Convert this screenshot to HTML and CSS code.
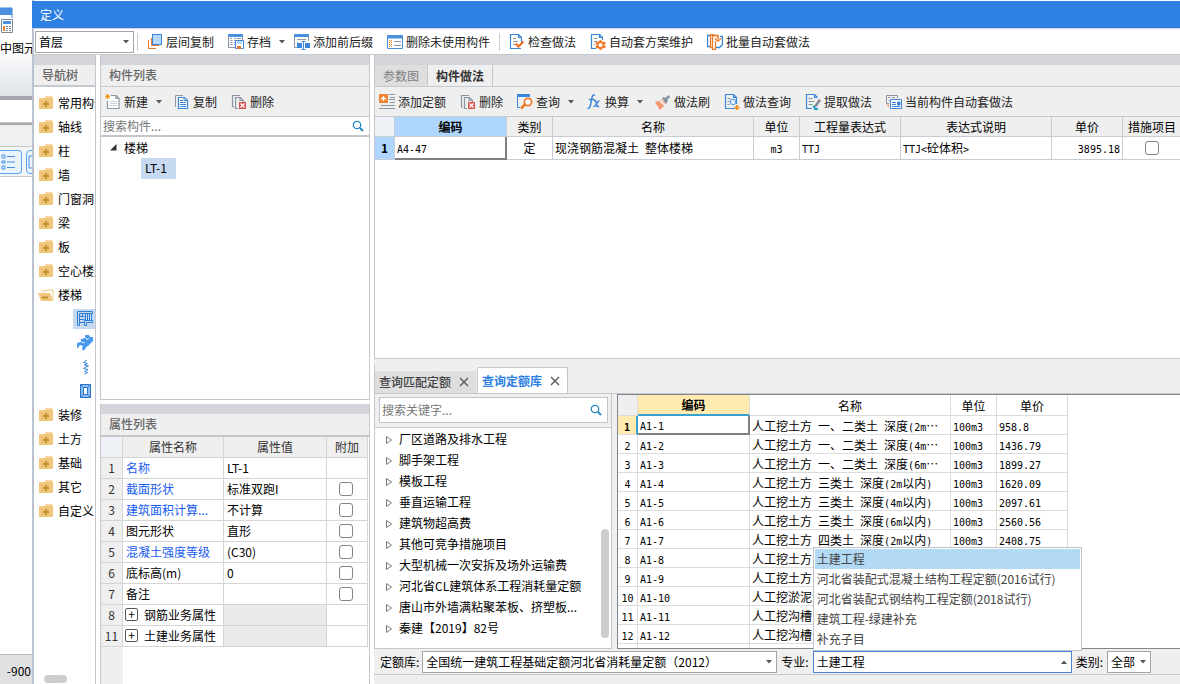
FILE: index.html
```html
<!DOCTYPE html>
<html lang="zh-CN">
<head>
<meta charset="utf-8">
<title>定义</title>
<link rel="stylesheet" href="styles.css">
</head>
<body>
<svg class="sprite" aria-hidden="true">
  <symbol id="i-layers" viewBox="0 0 16 16"><path d="M1.500 6v8.500H9M4.500 4v7.500H12" fill="none" stroke="#e8772e" stroke-width="1"/><rect x="5.500" y=".5" width="9" height="10" fill="#b5d8fb" stroke="#3b86d8"/></symbol>
  <symbol id="i-archive" viewBox="0 0 16 16"><path d="M.5 3v10.500H7M14.500 3v4M2.500 6.500h2M2.500 8.500h2M2.500 10.500h2M6 4.500h2M9 4.500h4M6 6.500h1M2 4.500h2M6 8.500h1M6 10.500h1" fill="none" stroke="#8b97a3"/><path d="M0 0h15v3H0z" fill="#4a90df"/><path d="M7.500 6.500h8v8h-8z" fill="#fff" stroke="#3b86d8"/><path d="M9 7h5v3H9z" fill="#b5d8fb"/><path d="M9 12h4v3H9z" fill="#e8772e"/></symbol>
  <symbol id="i-prefix" viewBox="0 0 16 16"><path d="M.5 3v10.500H3M14.500 3v4M3 5.500h9M3 8.500h1" fill="none" stroke="#8b97a3"/><path d="M0 0h15v3H0z" fill="#4a90df"/><path d="M3 9h5v5H3zM11 9h5v5h-5z" fill="#3b86d8"/><path d="M9.500 8v7M7.500 7.500h4M7.500 15.500h4" stroke="#3b86d8"/></symbol>
  <symbol id="i-unused" viewBox="0 0 16 16"><path d="M.5 1.500h15v13H.5z" fill="#fff" stroke="#4a90df"/><path d="M0 1h16v3.500H0z" fill="#4a90df"/><path d="M2 6l3 3M5 6L2 9M2 10l3 3M5 10l-3 3" stroke="#e8932e"/><path d="M7 7.500h7M7 11.500h7" stroke="#8b97a3"/></symbol>
  <symbol id="i-check" viewBox="0 0 16 16"><path d="M12 14.500H1.500V.5h8l3 3V8M9.500.5v3h3" fill="none" stroke="#3b86d8" stroke-width="1.200"/><path d="M4 4.500h3M4 7.500h5M4 10.500h2" stroke="#8b97a3"/><path d="M6.500 9.500l3 3 5-5" fill="none" stroke="#ea6c22" stroke-width="2"/></symbol>
  <symbol id="i-gear" viewBox="0 0 16 16"><path d="M6 14.500H1.500V.5h8l3 3V6M9.500.5v3h3" fill="none" stroke="#3b86d8" stroke-width="1.200"/><path d="M4 4.500h3M4 7.500h3M4 10.500h1" stroke="#8b97a3"/><circle cx="10.500" cy="11" r="3" fill="#fff" stroke="#ef7a2a" stroke-width="2"/><path d="M10.500 6v2M10.500 14v2M5.800 8.500l2 1M13.500 12.500l2 1M5.800 13.500l2-1M13.500 9.500l2-1" stroke="#ef7a2a" stroke-width="2"/></symbol>
  <symbol id="i-batch" viewBox="0 0 16 16"><path d="M3 1.500H.5v11H3M13 2.500h2.500v8l-3 3H9" fill="none" stroke="#3b86d8" stroke-width="1.300"/><path d="M7 .5H3.500v13H5M9 1.500H5.500v14h3V7" fill="none" stroke="#ef7a2a" stroke-width="1.300"/><path d="M7 1.500h4V5M8 4.500l3 2.500 3-2.500" fill="none" stroke="#ef7a2a" stroke-width="1.500"/></symbol>
  <symbol id="i-new" viewBox="0 0 16 16"><path d="M6 1.500h5l3 3v10H2.500V7M11 1.500v3h3" fill="#fff" stroke="#8b97a3" stroke-width="1.200"/><path d="M5 7.500h7M5 9.500h7M5 11.500h7" stroke="#c9ced4"/><path d="M2.500 0v5M0 2.500h5M.5.5l4 4M4.500.5l-4 4" stroke="#f29a1f"/></symbol>
  <symbol id="i-copy" viewBox="0 0 16 16"><path d="M9 1.500H1.500V13" fill="none" stroke="#8b97a3"/><path d="M4.500 3.500h6l3 3v8h-9z" fill="#fff" stroke="#3b86d8" stroke-width="1.200"/><path d="M10 3.500v3h3.500M6 8.500h6M6 10.500h6M6 12.500h6M6 6.500h3" fill="none" stroke="#3b86d8"/></symbol>
  <symbol id="i-del" viewBox="0 0 16 16"><path d="M9 1.500H1.500V13H3M7 14.500H4.500v-11h5l3 3V8M9 3.500v3h3.500" fill="none" stroke="#8b97a3" stroke-width="1.200"/><path d="M8 8h7v7H8z" fill="#d65555"/><path d="M9.500 9.500l4 4M13.500 9.500l-4 4" stroke="#fff" stroke-width="1.200"/></symbol>
  <symbol id="i-add" viewBox="0 0 16 16"><path d="M0 0h9v9H0z" fill="#ef8437"/><path d="M4.500 2v5M2 4.500h5" stroke="#fff" stroke-width="1.300"/><path d="M10 .5h6M11 3.500h5M10 5.500h6M11 8.500h5M2 11.500h14M0 14.500h16" stroke="#8b97a3"/></symbol>
  <symbol id="i-query" viewBox="0 0 16 16"><path d="M0 0h13v3H0z" fill="#3b86d8"/><path d="M.5 2v11.500H3" fill="none" stroke="#3b86d8"/><circle cx="11" cy="8" r="3.600" fill="#fff" stroke="#ef7a2a" stroke-width="1.800"/><path d="M8 10.500l-4 4" stroke="#ef7a2a" stroke-width="2.500"/></symbol>
  <symbol id="i-fx" viewBox="0 0 16 16"><path d="M9 1.500C6.500-.5 6 3 5.500 6S4 15.500 1.500 14.500M3 5.500h5.500M8 7c2-1.500 2 .5 2.500 3s1 3.500 2.500 2M13.500 7c-2-.5-4 6.500-6 5.500" fill="none" stroke="#3b86d8" stroke-width="1.500"/></symbol>
  <symbol id="i-brush" viewBox="0 0 16 16"><path d="M0 8l4-1 5 5-4 4z" fill="#f5956b"/><path d="M5 6l2-1 4 4-1 2z" fill="#f7c7b0"/><path d="M7 4l2-1 1 1 4-3 1 2-3 3 1 1-2 3z" fill="#8292a0"/></symbol>
  <symbol id="i-docfind" viewBox="0 0 16 16"><path d="M11 14.500H1.500V.5h8l3 3V10M9.500.5v3h3" fill="none" stroke="#3b86d8" stroke-width="1.200"/><path d="M3.500 4.500h3M3.500 7.500h2M3.500 10.500h2" stroke="#8b97a3"/><circle cx="9" cy="8" r="2.800" fill="#dcecfb" stroke="#5797d8"/><path d="M13 11v5M10.500 13.500h5" stroke="#f2961f" stroke-width="2"/></symbol>
  <symbol id="i-extract" viewBox="0 0 16 16"><path d="M7 14.500H1.500V.5h8l3 3M9.500.5v3h3" fill="none" stroke="#3b86d8" stroke-width="1.200"/><path d="M3.500 4.500h4M3.500 7.500h6M3.500 10.500h4" stroke="#8b97a3"/><path d="M9 12l5-7 2 1.500-5 7z" fill="#7d8790"/><path d="M8 12l2 2M9 15h4" stroke="#20a5c9" stroke-width="2"/></symbol>
  <symbol id="i-current" viewBox="0 0 16 16"><path d="M11.500 4V1.500H.5v8H3M2.500 3.500h2M6 3.500h3M2.500 6.500h1" fill="none" stroke="#8b97a3"/><path d="M4.500 5.500h11v9h-11z" fill="#fff" stroke="#3b86d8"/><path d="M6 8.500h4M6 10.500h4M6 12.500h8M11.500 8h2.500v3h-2.500z" fill="#3b86d8" stroke="#3b86d8"/><path d="M2 10v2h1" stroke="#ef7a2a" fill="none"/></symbol>
  <symbol id="i-search" viewBox="0 0 12 12"><circle cx="5" cy="5" r="3.700" fill="none" stroke="#2488bd" stroke-width="1.300"/><path d="M8 8l3 3" stroke="#2488bd" stroke-width="1.800"/></symbol>
  <symbol id="i-folder" viewBox="0 0 16 14"><path d="M8 0h6l1 2H7z" fill="#f3d39b"/><path d="M1 2h14v11H1z" fill="#f0c67b"/><path d="M8 5v6M5 8h6" stroke="#c1902f" stroke-width="2"/></symbol>
  <symbol id="i-folder-open" viewBox="0 0 16 14"><path d="M3 3h5l1-1h6v10" fill="#fff" stroke="#f0c67b"/><path d="M0 5h12l3 8H3z" fill="#f0c67b"/><path d="M4 9.500h6" stroke="#c1902f" stroke-width="2"/></symbol>
  <symbol id="i-stair1" viewBox="0 0 16 16"><path d="M.5.5h15v2h-13v12h-2zM7.500 14.500v-5h8v2h-6v3zM2.500 5.500h5M2.500 8.500h5M2.500 11.500h5M5.500 2.500v3M8.500 2.500v7M10.500 2.500v7M12.500 2.500v7M14.500 2.500v7" fill="none" stroke="#2c7fd6"/></symbol>
  <symbol id="i-stair2" viewBox="0 0 16 16"><path d="M0 8l4-1v-3l4-1V0h4l1 2h3v4l-4 4-1 1-2 1v1l-3 3-1-3 1-2-3-1-2 3H0z" fill="#4a98ee"/><path d="M4.500 7l2 1 1-1M8.500 3l2 1.500 1-1.500" fill="none" stroke="#fff"/></symbol>
  <symbol id="i-stair3" viewBox="0 0 16 16"><path d="M10 1L6.500 3.500l4 1-3 1.500 4 1-4 1.500-1 1 4.500 1-3.500 2 3 1-3 1.500" fill="none" stroke="#3b86d8"/></symbol>
  <symbol id="i-stair4" viewBox="0 0 16 16"><path d="M3 1h11v14H3z" fill="#8ebcf0"/><path d="M3.500 1.500h10v13h-10zM6.500 4.500h4v7h-4zM3.500 1.500l3 3M13.500 1.500l-3 3M3.500 14.500l3-3M13.500 14.500l-3-3" fill="none" stroke="#2c75cc"/><path d="M7 5h3v6H7z" fill="#fff"/></symbol>
  <symbol id="i-down" viewBox="0 0 6 4"><path d="M0 0h6L3 3.500z" fill="#555"/></symbol>
  <symbol id="i-up" viewBox="0 0 6 4"><path d="M0 4h6L3 .5z" fill="#555"/></symbol>
  <symbol id="i-tri" viewBox="0 0 6 8"><path d="M.5.5v7l5-3.500z" fill="#fff" stroke="#777"/></symbol>
  <symbol id="i-tri-open" viewBox="0 0 7 7"><path d="M6.500 0v6.500H0z" fill="#333"/></symbol>
  <symbol id="i-close" viewBox="0 0 10 10"><path d="M1 1l8 8M9 1l-8 8" stroke="#555" stroke-width="1.300"/></symbol>
</svg>

<div class="desk">
  <aside class="back">
    <div class="back-ribbon">
      <svg class="back-logo" viewBox="0 0 32 38"><path d="M0 8h12v10" fill="none" stroke="#3b86d8"/><path d="M0 8h12v7H0z" fill="#4a90df"/><path d="M1.500 19.500h11v13h-11z" fill="#fff" stroke="#7b8894"/><path d="M3 21h8v3H3z" fill="#4a90df"/><path d="M3 26.500h8M3 28.500h8M3 30.500h8" stroke="#7b8894" stroke-dasharray="2 1"/><path d="M3 26h2v5H3z" fill="#ef8437"/></svg>
      <span class="back-label">中图元</span>
    </div>
    <div class="back-gap"></div>
    <div class="back-head"></div>
    <div class="back-tools">
      <button class="back-btn" aria-label="列表"><svg viewBox="0 0 16 16"><path d="M2 1h3v3H2zM2 7h3v2H2zM2 12h3v3H2zM7 2.500h8M7 8h8M7 13.500h8" fill="none" stroke="#4a90df"/></svg></button>
      <button class="back-btn" aria-label="视图"><svg viewBox="0 0 16 16"><path d="M2 2h12v12H2z" fill="none" stroke="#4a90df"/></svg></button>
    </div>
    <div class="back-canvas"></div>
    <div class="back-status">-900</div>
  </aside>

  <main class="dialog">
    <h1 class="title">定义</h1>
    <div class="toolbar main-tools">
      <div class="combo floor"><select aria-label="楼层"><option>首层</option></select><svg class="arr"><use href="#i-down"/></svg></div>
      <span class="sep"></span>
      <button class="tool"><svg class="ic"><use href="#i-layers"/></svg>层间复制</button>
      <button class="tool more"><svg class="ic"><use href="#i-archive"/></svg>存档<svg class="drop"><use href="#i-down"/></svg></button>
      <button class="tool"><svg class="ic"><use href="#i-prefix"/></svg>添加前后缀</button>
      <button class="tool"><svg class="ic"><use href="#i-unused"/></svg>删除未使用构件</button>
      <span class="sep"></span>
      <button class="tool"><svg class="ic"><use href="#i-check"/></svg>检查做法</button>
      <button class="tool"><svg class="ic"><use href="#i-gear"/></svg>自动套方案维护</button>
      <button class="tool"><svg class="ic"><use href="#i-batch"/></svg>批量自动套做法</button>
    </div>

    <div class="work">
      <nav class="nav">
        <div class="band"></div>
        <h2 class="head">导航树</h2>
        <ul class="nav-list">
          <li><svg><use href="#i-folder"/></svg>常用构件</li>
          <li><svg><use href="#i-folder"/></svg>轴线</li>
          <li><svg><use href="#i-folder"/></svg>柱</li>
          <li><svg><use href="#i-folder"/></svg>墙</li>
          <li><svg><use href="#i-folder"/></svg>门窗洞</li>
          <li><svg><use href="#i-folder"/></svg>梁</li>
          <li><svg><use href="#i-folder"/></svg>板</li>
          <li><svg><use href="#i-folder"/></svg>空心楼盖</li>
          <li><svg><use href="#i-folder-open"/></svg>楼梯</li>
          <li class="leaf"><span class="pick on"><svg><use href="#i-stair1"/></svg></span></li>
          <li class="leaf"><span class="pick"><svg><use href="#i-stair2"/></svg></span></li>
          <li class="leaf"><span class="pick"><svg><use href="#i-stair3"/></svg></span></li>
          <li class="leaf"><span class="pick"><svg><use href="#i-stair4"/></svg></span></li>
          <li><svg><use href="#i-folder"/></svg>装修</li>
          <li><svg><use href="#i-folder"/></svg>土方</li>
          <li><svg><use href="#i-folder"/></svg>基础</li>
          <li><svg><use href="#i-folder"/></svg>其它</li>
          <li><svg><use href="#i-folder"/></svg>自定义</li>
        </ul>
        <div class="hbar"></div>
      </nav>

      <div class="mid">
        <section class="pane parts">
          <div class="band"></div>
          <h2 class="head">构件列表</h2>
          <div class="toolbar sub">
            <button class="tool more"><svg class="ic"><use href="#i-new"/></svg>新建<svg class="drop"><use href="#i-down"/></svg></button>
            <button class="tool"><svg class="ic"><use href="#i-copy"/></svg>复制</button>
            <button class="tool"><svg class="ic"><use href="#i-del"/></svg>删除</button>
          </div>
          <label class="search"><input type="text" placeholder="搜索构件..." aria-label="搜索构件"><svg><use href="#i-search"/></svg></label>
          <ul class="part-tree">
            <li><svg><use href="#i-tri-open"/></svg>楼梯</li>
            <li class="child"><span>LT-1</span></li>
          </ul>
        </section>
        <section class="pane props">
          <div class="band"></div>
          <h2 class="head">属性列表</h2>
          <div class="prop-body">
          <table class="prop">
            <colgroup><col class="p0"><col class="p1"><col class="p2"><col class="p3"></colgroup>
            <thead><tr><th></th><th>属性名称</th><th>属性值</th><th>附加</th></tr></thead>
            <tbody>
              <tr><th>1</th><td class="link">名称</td><td>LT-1</td><td></td></tr>
              <tr><th>2</th><td class="link">截面形状</td><td>标准双跑I</td><td><input type="checkbox" aria-label="截面形状附加"></td></tr>
              <tr><th>3</th><td class="link">建筑面积计算...</td><td>不计算</td><td><input type="checkbox" aria-label="建筑面积附加"></td></tr>
              <tr><th>4</th><td>图元形状</td><td>直形</td><td><input type="checkbox" aria-label="图元形状附加"></td></tr>
              <tr><th>5</th><td class="link">混凝土强度等级</td><td>(C30)</td><td><input type="checkbox" aria-label="混凝土强度等级附加"></td></tr>
              <tr><th>6</th><td>底标高(m)</td><td>0</td><td><input type="checkbox" aria-label="底标高附加"></td></tr>
              <tr><th>7</th><td>备注</td><td></td><td><input type="checkbox" aria-label="备注附加"></td></tr>
              <tr><th>8</th><td class="group"><button class="plus">+</button>钢筋业务属性</td><td class="off"></td><td></td></tr>
              <tr><th>11</th><td class="group"><button class="plus">+</button>土建业务属性</td><td class="off"></td><td></td></tr>
            </tbody>
          </table>
          </div>
        </section>
      </div>

      <div class="right">
        <section class="methods">
          <div class="band"></div>
          <div class="tabs"><button class="tab">参数图</button><button class="tab on">构件做法</button></div>
          <div class="toolbar sub">
            <button class="tool"><svg class="ic"><use href="#i-add"/></svg>添加定额</button>
            <button class="tool"><svg class="ic"><use href="#i-del"/></svg>删除</button>
            <button class="tool more"><svg class="ic"><use href="#i-query"/></svg>查询<svg class="drop"><use href="#i-down"/></svg></button>
            <button class="tool more"><svg class="ic"><use href="#i-fx"/></svg>换算<svg class="drop"><use href="#i-down"/></svg></button>
            <button class="tool"><svg class="ic"><use href="#i-brush"/></svg>做法刷</button>
            <button class="tool"><svg class="ic"><use href="#i-docfind"/></svg>做法查询</button>
            <button class="tool"><svg class="ic"><use href="#i-extract"/></svg>提取做法</button>
            <button class="tool"><svg class="ic"><use href="#i-current"/></svg>当前构件自动套做法</button>
          </div>
          <div class="grid-wrap">
          <table class="grid main-grid">
            <colgroup><col class="c-no"><col class="c-code"><col class="c-unit"><col class="c-name"><col class="c-unit"><col class="c-expr"><col class="c-desc"><col class="c-price"><col class="c-flag"></colgroup>
            <thead><tr><th></th><th class="sel">编码</th><th>类别</th><th>名称</th><th>单位</th><th>工程量表达式</th><th>表达式说明</th><th>单价</th><th>措施项目</th></tr></thead>
            <tbody><tr><th>1</th><td class="cur"><span class="m">A4-47</span></td><td class="c">定</td><td>现浇钢筋混凝土<span class="m"> </span>整体楼梯</td><td class="c"><span class="m">m3</span></td><td><span class="m">TTJ</span></td><td><span class="m">TTJ&lt;</span>砼体积<span class="m">&gt;</span></td><td class="r"><span class="m">3895.18</span></td><td class="c"><input type="checkbox" aria-label="措施项目"></td></tr></tbody>
          </table>
          </div>
        </section>

        <section class="lookup">
          <div class="tabs2">
            <div class="tab2">查询匹配定额<button class="x" aria-label="关闭"><svg><use href="#i-close"/></svg></button></div>
            <div class="tab2 on">查询定额库<button class="x" aria-label="关闭"><svg><use href="#i-close"/></svg></button></div>
          </div>
          <div class="lookup-body">
            <div class="chapters">
              <label class="search boxed"><input type="text" placeholder="搜索关键字..." aria-label="搜索关键字"><svg><use href="#i-search"/></svg></label>
              <div class="tree-wrap">
                <ul class="tree">
                  <li><svg><use href="#i-tri"/></svg>厂区道路及排水工程</li>
                  <li><svg><use href="#i-tri"/></svg>脚手架工程</li>
                  <li><svg><use href="#i-tri"/></svg>模板工程</li>
                  <li><svg><use href="#i-tri"/></svg>垂直运输工程</li>
                  <li><svg><use href="#i-tri"/></svg>建筑物超高费</li>
                  <li><svg><use href="#i-tri"/></svg>其他可竞争措施项目</li>
                  <li><svg><use href="#i-tri"/></svg>大型机械一次安拆及场外运输费</li>
                  <li><svg><use href="#i-tri"/></svg>河北省CL建筑体系工程消耗量定额</li>
                  <li><svg><use href="#i-tri"/></svg>唐山市外墙满粘聚苯板、挤塑板...</li>
                  <li><svg><use href="#i-tri"/></svg>秦建【2019】82号</li>
                </ul>
                <div class="vbar"></div>
              </div>
            </div>
            <div class="quota">
              <table class="grid quota-grid">
                <colgroup><col class="c-no"><col class="c-code"><col class="c-name"><col class="c-unit"><col class="c-price"></colgroup>
                <thead><tr><th></th><th class="sel">编码</th><th>名称</th><th>单位</th><th>单价</th></tr></thead>
                <tbody>
                  <tr class="active"><th><span class="m">1</span></th><td class="cur"><span class="m">A1-1</span></td><td>人工挖土方<span class="m"> </span>一、二类土<span class="m"> </span>深度<span class="m">(2m</span>⋯</td><td><span class="m">100m3</span></td><td><span class="m">958.8</span></td></tr>
                  <tr><th><span class="m">2</span></th><td><span class="m">A1-2</span></td><td>人工挖土方<span class="m"> </span>一、二类土<span class="m"> </span>深度<span class="m">(4m</span>⋯</td><td><span class="m">100m3</span></td><td><span class="m">1436.79</span></td></tr>
                  <tr><th><span class="m">3</span></th><td><span class="m">A1-3</span></td><td>人工挖土方<span class="m"> </span>一、二类土<span class="m"> </span>深度<span class="m">(6m</span>⋯</td><td><span class="m">100m3</span></td><td><span class="m">1899.27</span></td></tr>
                  <tr><th><span class="m">4</span></th><td><span class="m">A1-4</span></td><td>人工挖土方<span class="m"> </span>三类土<span class="m"> </span>深度<span class="m">(2m</span>以内<span class="m">)</span></td><td><span class="m">100m3</span></td><td><span class="m">1620.09</span></td></tr>
                  <tr><th><span class="m">5</span></th><td><span class="m">A1-5</span></td><td>人工挖土方<span class="m"> </span>三类土<span class="m"> </span>深度<span class="m">(4m</span>以内<span class="m">)</span></td><td><span class="m">100m3</span></td><td><span class="m">2097.61</span></td></tr>
                  <tr><th><span class="m">6</span></th><td><span class="m">A1-6</span></td><td>人工挖土方<span class="m"> </span>三类土<span class="m"> </span>深度<span class="m">(6m</span>以内<span class="m">)</span></td><td><span class="m">100m3</span></td><td><span class="m">2560.56</span></td></tr>
                  <tr><th><span class="m">7</span></th><td><span class="m">A1-7</span></td><td>人工挖土方<span class="m"> </span>四类土<span class="m"> </span>深度<span class="m">(2m</span>以内<span class="m">)</span></td><td><span class="m">100m3</span></td><td><span class="m">2408.75</span></td></tr>
                  <tr><th><span class="m">8</span></th><td><span class="m">A1-8</span></td><td>人工挖土方</td><td></td><td></td></tr>
                  <tr><th><span class="m">9</span></th><td><span class="m">A1-9</span></td><td>人工挖土方</td><td></td><td></td></tr>
                  <tr><th><span class="m">10</span></th><td><span class="m">A1-10</span></td><td>人工挖淤泥流砂</td><td></td><td></td></tr>
                  <tr><th><span class="m">11</span></th><td><span class="m">A1-11</span></td><td>人工挖沟槽</td><td></td><td></td></tr>
                  <tr><th><span class="m">12</span></th><td><span class="m">A1-12</span></td><td>人工挖沟槽</td><td></td><td></td></tr>
                  <tr><th></th><td></td><td></td><td></td><td></td></tr>
                </tbody>
              </table>
            </div>
          </div>
          <div class="filter">
            <label for="lib">定额库:</label>
            <div class="combo lib"><select id="lib"><option>全国统一建筑工程基础定额河北省消耗量定额（2012）</option></select><svg class="arr"><use href="#i-down"/></svg></div>
            <label for="major">专业:</label>
            <div class="combo major"><select id="major"><option>土建工程</option></select><svg class="arr"><use href="#i-up"/></svg>
              <ul class="menu" role="listbox">
                <li role="option" class="on">土建工程</li>
                <li role="option">河北省装配式混凝土结构工程定额(2016试行)</li>
                <li role="option">河北省装配式钢结构工程定额(2018试行)</li>
                <li role="option">建筑工程-绿建补充</li>
                <li role="option">补充子目</li>
              </ul>
            </div>
            <label for="kind">类别:</label>
            <div class="combo kind"><select id="kind"><option>全部</option></select><svg class="arr"><use href="#i-down"/></svg></div>
          </div>
        </section>
      </div>
    </div>
  </main>
</div>
</body>
</html>
```
FILE: styles.css
```css
* { box-sizing: border-box; }
body {
  margin: 0;
  font: 12px/20px "Noto Sans CJK SC", sans-serif;
  color: #000;
  background: #fff;
}
button, input, select { font: inherit; color: inherit; margin: 0; }
button { border: 0; background: none; padding: 0; }
ul { list-style: none; margin: 0; padding: 0; }
h1, h2 { margin: 0; font-size: 12px; font-weight: 400; }
svg { display: block; flex: none; }
.sprite { position: absolute; width: 0; height: 0; }

.desk { display: flex; height: 100vh; overflow: hidden; }

/* application behind the dialog */
.back { width: 32px; flex: none; display: flex; flex-direction: column; overflow: hidden; }
.back-ribbon { height: 100px; flex: none; background: linear-gradient(#fff 50%, #dfe3e8); border-bottom: 4px solid #a3a6ad; }
.back-logo { width: 32px; height: 38px; }
.back-label { display: block; white-space: nowrap; }
.back-gap { height: 23px; flex: none; border-bottom: 1px solid #c8c8c8; }
.back-head { height: 24px; flex: none; background: #f0f0f0; border-top: 2px solid #a8a8a8; border-bottom: 1px solid #c5c9d0; }
.back-tools { height: 30px; flex: none; display: flex; gap: 4px; align-items: center; background: #f4f5f7; border-bottom: 1px solid #c5c9d0; }
.back-btn { width: 22px; height: 24px; flex: none; border: 1px solid #5aa5f0; border-left: 0; border-radius: 0 4px 4px 0; background: #eaf4ff; }
.back-btn + .back-btn { border-left: 1px solid #5aa5f0; border-radius: 4px; }
.back-btn svg { width: 16px; height: 16px; }
.back-canvas { flex: 1; }
.back-status { height: 30px; flex: none; padding: 6px 1px 0 0; text-align: right; background: #e0e0e3; border-top: 1px solid #b9bcc4; }

.dialog { flex: 1; min-width: 0; display: flex; flex-direction: column; border-left: 2px solid #bac1d1; padding-top: 1px; }
.title { height: 27px; flex: none; margin-left: -2px; padding: 0 8px; line-height: 27px; color: #fff; background: #2d7fe2; }

.toolbar { display: flex; align-items: center; flex: none; }
.main-tools { height: 27px; border-top: 1px solid #d0d3da; border-bottom: 1px solid #c5c9d0; padding-left: 1px; }
.tool { display: flex; align-items: center; gap: 3px; padding: 0 7px; height: 20px; line-height: 20px; white-space: nowrap; flex: none; color: #222; }
.main-tools .more { padding-right: 2px; }
.sub .more { padding-right: 5px; }
.ic { width: 16px; height: 16px; }
.drop { width: 6px; height: 4px; margin-left: 5px; }
.sep { width: 1px; height: 18px; margin: 0 2px; background: #ccc; flex: none; }
.sub { height: 30px; background: #efefef; border-bottom: 1px solid #c5c9d0; overflow: hidden; }
.sub .tool:first-child { padding-left: 4px; }

.combo { position: relative; height: 22px; background: #fff; border: 1px solid #a5a5a5; }
.combo select { appearance: none; width: 100%; height: 20px; line-height: 20px; padding: 0 12px 0 3px; border: 0; background: none; outline: 0; display: block; }
.combo .arr { position: absolute; right: 4px; top: 8px; width: 6px; height: 4px; pointer-events: none; }
.floor { width: 99px; margin-right: 1px; flex: none; }

.work { flex: 1; min-height: 0; display: flex; gap: 4px; }
.band { height: 10px; flex: none; background: #d4d5da; }
.head { height: 22px; flex: none; padding: 0 8px; line-height: 20px; font-weight: 500; color: #666; background: #efefef; border-bottom: 1px solid #c5c9d0; }

.nav { width: 62px; flex: none; display: flex; flex-direction: column; border-right: 1px solid #c5c7cc; overflow: hidden; }
.nav .head { border-bottom-width: 2px; }
.nav-list { flex: 1; padding-top: 4px; }
.nav-list li { display: flex; align-items: center; gap: 4px; height: 24px; padding-left: 4px; white-space: nowrap; }
.nav-list svg { width: 16px; height: 14px; }
.nav-list .leaf { justify-content: flex-end; }
.pick { padding: 2px 2px 2px 4px; }
.pick.on { background: #c6d9f1; }
.nav-list .pick svg { width: 16px; height: 16px; }
.hbar { width: 23px; height: 8px; margin: 0 0 1px 10px; border-radius: 4px; background: #cdcdcd; flex: none; }

.mid { width: 270px; flex: none; display: flex; flex-direction: column; gap: 4px; }
.pane { display: flex; flex-direction: column; min-height: 0; border: solid #c5c7cc; border-width: 0 1px; overflow: hidden; }
.parts { flex: 345 1 0; border-bottom-width: 1px; }
.props { flex: 280 1 0; }
.props .head { height: 23px; border-bottom: 2px solid #c5c7cc; }

.search { display: flex; align-items: center; height: 20px; flex: none; padding: 0 5px 0 2px; border-bottom: 2px solid #c5c7cc; background: #fff; }
.search input { flex: 1; min-width: 0; height: 18px; border: 0; padding: 0; outline: 0; background: none; }
.search input::placeholder { color: #777; opacity: 1; }
.search svg { width: 12px; height: 12px; }
.boxed { height: 26px; margin: 3px 3px 4px 4px; border: 1px solid #bfc3cb; }

.part-tree li { display: flex; align-items: center; gap: 7px; height: 21px; padding-left: 9px; }
.part-tree svg { width: 7px; height: 7px; }
.part-tree .child { padding-left: 40px; }
.child span { padding: 0 9px 1px 4px; background: #c6d9f1; }

.prop-body { flex: 1; min-height: 0; background: linear-gradient(90deg, #efefef 22px, #fff 22px); }
table { border-collapse: separate; border-spacing: 0; table-layout: fixed; }
th, td { padding: 0; font-weight: 400; white-space: nowrap; overflow: hidden; }
.prop { width: 267px; background: #fff; }
.p0 { width: 22px; } .p1 { width: 101px; } .p2 { width: 103px; } .p3 { width: 41px; }
.prop th, .prop td { height: 21px; border: solid #d5d5d5; border-width: 0 1px 1px 0; }
.prop th { background: #efefef; color: #333; text-align: center; }
.prop thead th:first-child { background: #eef1f6; }
.prop td { padding-left: 3px; }
.prop td:last-child { padding: 0 2px 0 0; text-align: center; }
.prop .link { color: #1a5cf0; }
.prop .off { background: #eaeaea; }
.plus { width: 13px; height: 13px; margin: 0 6px 0 -1px; border: 1px solid #555; border-radius: 2px; line-height: 10px; vertical-align: 1px; }
input[type="checkbox"] { appearance: none; display: block; width: 14px; height: 14px; margin: 0 auto; border: 1px solid #858585; border-radius: 3px; background: #fff; }

.right { flex: 1; min-width: 0; display: flex; flex-direction: column; background: #efefef; }
.methods { flex: 303 1 0; min-height: 0; display: flex; flex-direction: column; border-left: 1px solid #c5c7cc; border-bottom: 1px solid #c5c9d0; overflow: hidden; }
.tabs { display: flex; height: 22px; flex: none; border-bottom: 1px solid #c5c9d0; }
.tab { padding: 0 8px; color: #808080; background: #dedede; border-right: 1px solid #c5c7cc; }
.tab.on { font-weight: 700; color: #333; background: #efefef; }
.grid-wrap { flex: 1; min-height: 0; background: #fff; overflow: hidden; }
.c-no { width: 20px; } .c-code { width: 112px; } .c-unit { width: 46px; } .c-name { width: 201px; }
.c-expr { width: 101px; } .c-desc { width: 151px; } .c-price { width: 71px; } .c-flag { width: 59px; }
.main-grid { width: 807px; }
.quota-grid { width: 450px; }
.grid th, .grid td { border: solid #c8ccd4; border-width: 0 1px 1px 0; }
.grid td { padding-left: 2px; }
.grid .c { text-align: center; padding: 0; }
.grid .r { text-align: right; padding: 0 2px 0 0; }
.m { font-family: "DejaVu Sans Mono", monospace; font-size: 10px; line-height: 10px; white-space: pre; }
.main-grid thead th { height: 20px; line-height: 19px; background: #efefef; }
.main-grid thead th:first-child { background: #eef1f6; }
.main-grid td, .main-grid tbody th { height: 23px; }
.main-grid .sel, .main-grid tbody th { background: #add5fe; font-weight: 700; }
.main-grid .cur { border-right: 2px solid #808080; border-bottom: 2px solid #808080; }

.lookup { flex: 311 1 0; min-height: 0; display: flex; flex-direction: column; padding: 5px 0 9px; }
.tabs2 { display: flex; align-items: flex-end; gap: 1px; height: 30px; flex: none; border-bottom: 1px solid #c5c7cc; border-left: 1px solid #c5c7cc; }
.tab2 { display: flex; align-items: center; gap: 8px; height: 22px; padding: 0 7px 0 4px; color: #444; background: #dedede; font-weight: 500; white-space: nowrap; }
.tab2.on { height: 26px; border: 1px solid #c5c7cc; border-bottom: 0; border-radius: 2px 2px 0 0; background: #fff; color: #2d7fe2; font-weight: 700; }
.x svg { width: 10px; height: 10px; }
.lookup-body { flex: 1; min-height: 0; display: flex; gap: 5px; }
.chapters { width: 238px; flex: none; display: flex; flex-direction: column; border: solid #c5c7cc; border-width: 0 1px 1px; }
.tree-wrap { flex: 1; min-height: 0; display: flex; background: #fff; border-top: 1px solid #c5c7cc; overflow: hidden; }
.tree { flex: 1; min-width: 0; }
.tree li { display: flex; align-items: center; gap: 7px; height: 21px; padding-left: 11px; white-space: nowrap; }
.tree svg { width: 6px; height: 8px; margin-top: 3px; }
.vbar { width: 8px; height: 109px; margin: 101px 2px 0 0; border-radius: 4px; background: #cdcdcd; flex: none; }
.quota { flex: 1; min-width: 0; background: #fff; border: 1px solid #80858f; border-right: 0; overflow: hidden; }
.quota-grid th, .quota-grid td { border-color: #dcdcdc; }
.quota-grid thead th { height: 21px; line-height: 19px; }
.quota-grid td, .quota-grid tbody th { height: 19px; line-height: 17px; }
.quota-grid thead th:first-child { background: #efefef; }
.quota-grid .sel { background: #ffebb0; font-weight: 700; border-bottom: 2px solid #35a3d2; }
.quota-grid .active th { background: #ffebb0; font-weight: 700; border-right: 2px solid #35a3d2; }
.quota-grid .cur { border-right: 2px solid #808080; border-bottom: 2px solid #808080; }

.filter { display: flex; align-items: center; height: 26px; flex: none; padding-left: 6px; border-bottom: 1px solid #c5c9d0; }
.filter label { white-space: nowrap; flex: none; }
.lib { flex: 355 1 0; max-width: 355px; margin: 0 4px 0 3px; }
.major { flex: 259 1 0; max-width: 259px; margin: 0 4px; border-color: #4f81d8; }
.kind { width: 44px; flex: none; margin-left: 4px; }
.menu { position: absolute; left: -1px; right: -11px; bottom: 21px; padding: 1px; background: #fff; border: 1px solid #bfc3c9; color: #444; z-index: 2; }
.menu li { height: 20px; padding-left: 2px; white-space: nowrap; }
.menu .on { background: #b2daf5; }
```
